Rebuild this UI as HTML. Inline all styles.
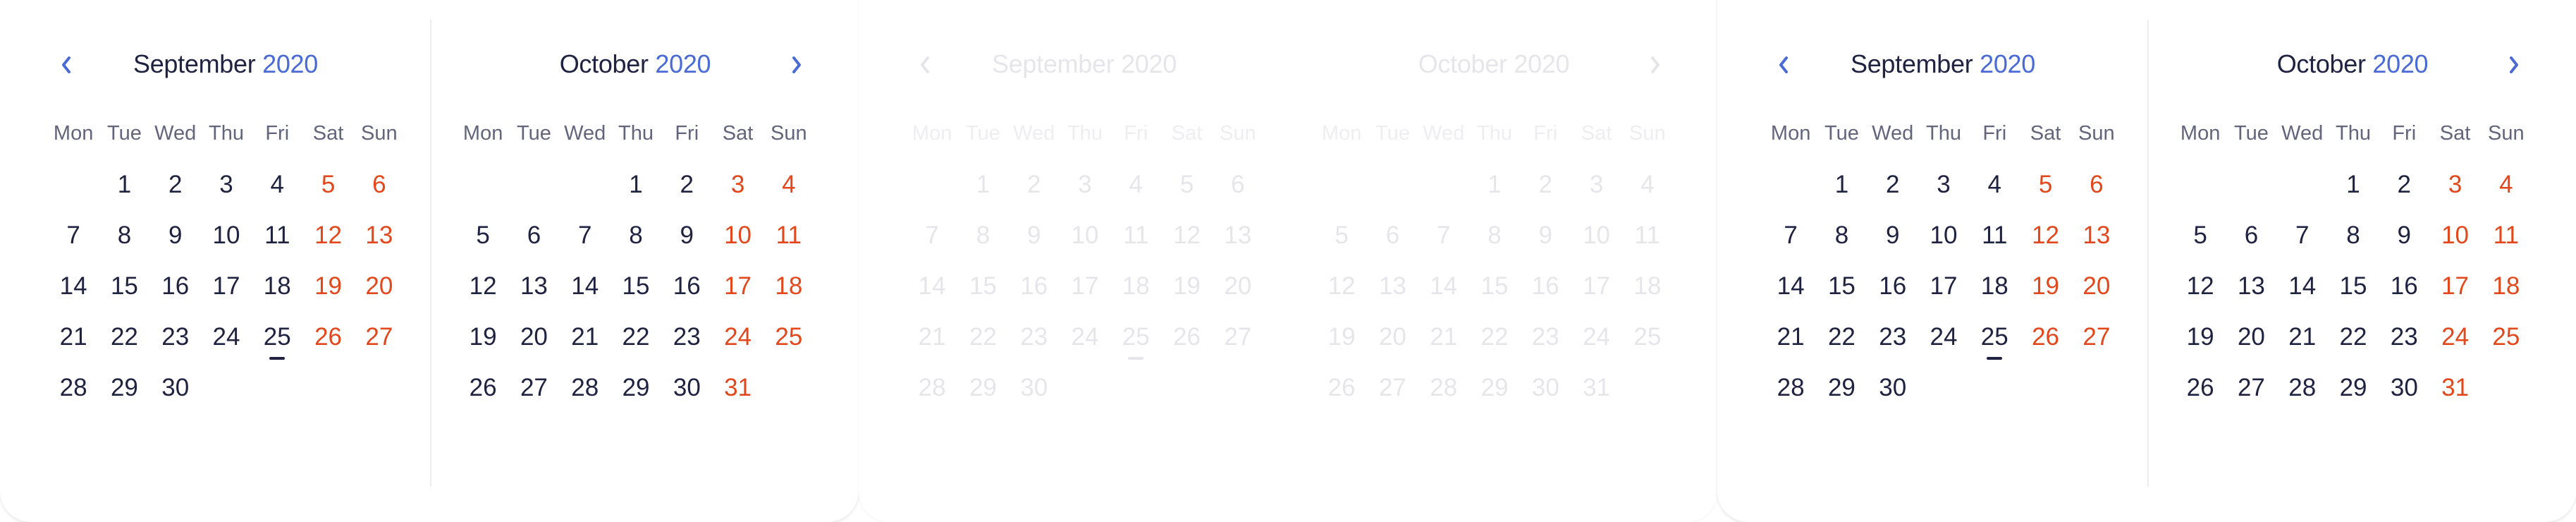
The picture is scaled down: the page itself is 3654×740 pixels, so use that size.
<!DOCTYPE html>
<html><head><meta charset="utf-8"><style>
*{margin:0;padding:0;box-sizing:border-box}
body{width:3654px;height:722px;background:#fff;position:relative;overflow:hidden;font-family:"Liberation Sans",sans-serif}
.p{position:absolute;top:-40px;width:1218px;height:780px;background:#fff;border-radius:0 0 44px 44px;box-shadow:0 2px 5px rgba(0,0,0,.1)}
.in{position:absolute;left:0;top:40px;width:1218px;height:700px}
.f{opacity:.11}
.div{position:absolute;left:610px;top:28px;width:2px;height:662px;background:#ececef}
.t{position:absolute;top:70px;font-size:36px;color:#1f2240;white-space:nowrap;transform:translateX(-50%);letter-spacing:-.3px}
.t b{font-weight:normal;color:#4a6bd6}
.ar{position:absolute;top:78px}
.m{position:absolute;width:506px}
.r{position:absolute;left:0;width:506px;display:flex}
.r span{width:72.3px;text-align:center;font-size:35px;color:#1f2240;height:44px;line-height:44px;position:relative}
.r span:nth-child(6),.r span:nth-child(7){color:#e2481c}
.h span{font-size:29px;color:#62657c!important}
.u:after{content:"";position:absolute;left:25px;width:22px;bottom:-10px;height:4px;border-radius:2px;background:#1f2240}
</style></head><body>

<div class="p" style="left:0"><div class="in">
<div class="div"></div>
<svg class="ar" style="left:84px" width="20" height="28" viewBox="0 0 20 28"><path d="M14 4 L6 14 L14 24" stroke="#4a6bd6" stroke-width="4" fill="none" stroke-linecap="round" stroke-linejoin="round"/></svg>
<div class="t" style="left:320px">September <b>2020</b></div>
<div class="t" style="left:901px">October <b>2020</b></div>
<svg class="ar" style="left:1120px" width="20" height="28" viewBox="0 0 20 28"><path d="M6 4 L14 14 L6 24" stroke="#4a6bd6" stroke-width="4" fill="none" stroke-linecap="round" stroke-linejoin="round"/></svg>
<div class="m" style="left:68px">
<div class="r h" style="top:167px"><span>Mon</span><span>Tue</span><span>Wed</span><span>Thu</span><span>Fri</span><span>Sat</span><span>Sun</span></div>
<div class="r" style="top:240px"><span></span><span>1</span><span>2</span><span>3</span><span>4</span><span>5</span><span>6</span></div>
<div class="r" style="top:312px"><span>7</span><span>8</span><span>9</span><span>10</span><span>11</span><span>12</span><span>13</span></div>
<div class="r" style="top:384px"><span>14</span><span>15</span><span>16</span><span>17</span><span>18</span><span>19</span><span>20</span></div>
<div class="r" style="top:456px"><span>21</span><span>22</span><span>23</span><span>24</span><span class="u">25</span><span>26</span><span>27</span></div>
<div class="r" style="top:528px"><span>28</span><span>29</span><span>30</span></div>
</div>
<div class="m" style="left:649px">
<div class="r h" style="top:167px"><span>Mon</span><span>Tue</span><span>Wed</span><span>Thu</span><span>Fri</span><span>Sat</span><span>Sun</span></div>
<div class="r" style="top:240px"><span></span><span></span><span></span><span>1</span><span>2</span><span>3</span><span>4</span></div>
<div class="r" style="top:312px"><span>5</span><span>6</span><span>7</span><span>8</span><span>9</span><span>10</span><span>11</span></div>
<div class="r" style="top:384px"><span>12</span><span>13</span><span>14</span><span>15</span><span>16</span><span>17</span><span>18</span></div>
<div class="r" style="top:456px"><span>19</span><span>20</span><span>21</span><span>22</span><span>23</span><span>24</span><span>25</span></div>
<div class="r" style="top:528px"><span>26</span><span>27</span><span>28</span><span>29</span><span>30</span><span>31</span></div>
</div>
</div></div>

<div class="p" style="left:1218px;box-shadow:0 2px 4px rgba(0,0,0,.04)"><div class="in">
<div class="f">
<svg class="ar" style="left:84px" width="20" height="28" viewBox="0 0 20 28"><path d="M14 4 L6 14 L14 24" stroke="#1f2240" stroke-width="4" fill="none" stroke-linecap="round" stroke-linejoin="round"/></svg>
<div class="t" style="left:320px">September <b style="color:#1f2240">2020</b></div>
<div class="t" style="left:901px">October <b style="color:#1f2240">2020</b></div>
<svg class="ar" style="left:1120px" width="20" height="28" viewBox="0 0 20 28"><path d="M6 4 L14 14 L6 24" stroke="#1f2240" stroke-width="4" fill="none" stroke-linecap="round" stroke-linejoin="round"/></svg>
<div class="m" style="left:68px">
<div class="r h" style="top:167px"><span>Mon</span><span>Tue</span><span>Wed</span><span>Thu</span><span>Fri</span><span>Sat</span><span>Sun</span></div>
<div class="r" style="top:240px"><span></span><span>1</span><span>2</span><span>3</span><span>4</span><span style="color:#1f2240">5</span><span style="color:#1f2240">6</span></div>
<div class="r" style="top:312px"><span>7</span><span>8</span><span>9</span><span>10</span><span>11</span><span style="color:#1f2240">12</span><span style="color:#1f2240">13</span></div>
<div class="r" style="top:384px"><span>14</span><span>15</span><span>16</span><span>17</span><span>18</span><span style="color:#1f2240">19</span><span style="color:#1f2240">20</span></div>
<div class="r" style="top:456px"><span>21</span><span>22</span><span>23</span><span>24</span><span class="u">25</span><span style="color:#1f2240">26</span><span style="color:#1f2240">27</span></div>
<div class="r" style="top:528px"><span>28</span><span>29</span><span>30</span></div>
</div>
<div class="m" style="left:649px">
<div class="r h" style="top:167px"><span>Mon</span><span>Tue</span><span>Wed</span><span>Thu</span><span>Fri</span><span>Sat</span><span>Sun</span></div>
<div class="r" style="top:240px"><span></span><span></span><span></span><span>1</span><span>2</span><span style="color:#1f2240">3</span><span style="color:#1f2240">4</span></div>
<div class="r" style="top:312px"><span>5</span><span>6</span><span>7</span><span>8</span><span>9</span><span style="color:#1f2240">10</span><span style="color:#1f2240">11</span></div>
<div class="r" style="top:384px"><span>12</span><span>13</span><span>14</span><span>15</span><span>16</span><span style="color:#1f2240">17</span><span style="color:#1f2240">18</span></div>
<div class="r" style="top:456px"><span>19</span><span>20</span><span>21</span><span>22</span><span>23</span><span style="color:#1f2240">24</span><span style="color:#1f2240">25</span></div>
<div class="r" style="top:528px"><span>26</span><span>27</span><span>28</span><span>29</span><span>30</span><span style="color:#1f2240">31</span></div>
</div>
</div>
</div></div>

<div class="p" style="left:2436px"><div class="in">
<div class="div"></div>
<svg class="ar" style="left:84px" width="20" height="28" viewBox="0 0 20 28"><path d="M14 4 L6 14 L14 24" stroke="#4a6bd6" stroke-width="4" fill="none" stroke-linecap="round" stroke-linejoin="round"/></svg>
<div class="t" style="left:320px">September <b>2020</b></div>
<div class="t" style="left:901px">October <b>2020</b></div>
<svg class="ar" style="left:1120px" width="20" height="28" viewBox="0 0 20 28"><path d="M6 4 L14 14 L6 24" stroke="#4a6bd6" stroke-width="4" fill="none" stroke-linecap="round" stroke-linejoin="round"/></svg>
<div class="m" style="left:68px">
<div class="r h" style="top:167px"><span>Mon</span><span>Tue</span><span>Wed</span><span>Thu</span><span>Fri</span><span>Sat</span><span>Sun</span></div>
<div class="r" style="top:240px"><span></span><span>1</span><span>2</span><span>3</span><span>4</span><span>5</span><span>6</span></div>
<div class="r" style="top:312px"><span>7</span><span>8</span><span>9</span><span>10</span><span>11</span><span>12</span><span>13</span></div>
<div class="r" style="top:384px"><span>14</span><span>15</span><span>16</span><span>17</span><span>18</span><span>19</span><span>20</span></div>
<div class="r" style="top:456px"><span>21</span><span>22</span><span>23</span><span>24</span><span class="u">25</span><span>26</span><span>27</span></div>
<div class="r" style="top:528px"><span>28</span><span>29</span><span>30</span></div>
</div>
<div class="m" style="left:649px">
<div class="r h" style="top:167px"><span>Mon</span><span>Tue</span><span>Wed</span><span>Thu</span><span>Fri</span><span>Sat</span><span>Sun</span></div>
<div class="r" style="top:240px"><span></span><span></span><span></span><span>1</span><span>2</span><span>3</span><span>4</span></div>
<div class="r" style="top:312px"><span>5</span><span>6</span><span>7</span><span>8</span><span>9</span><span>10</span><span>11</span></div>
<div class="r" style="top:384px"><span>12</span><span>13</span><span>14</span><span>15</span><span>16</span><span>17</span><span>18</span></div>
<div class="r" style="top:456px"><span>19</span><span>20</span><span>21</span><span>22</span><span>23</span><span>24</span><span>25</span></div>
<div class="r" style="top:528px"><span>26</span><span>27</span><span>28</span><span>29</span><span>30</span><span>31</span></div>
</div>
</div></div>

</body></html>
